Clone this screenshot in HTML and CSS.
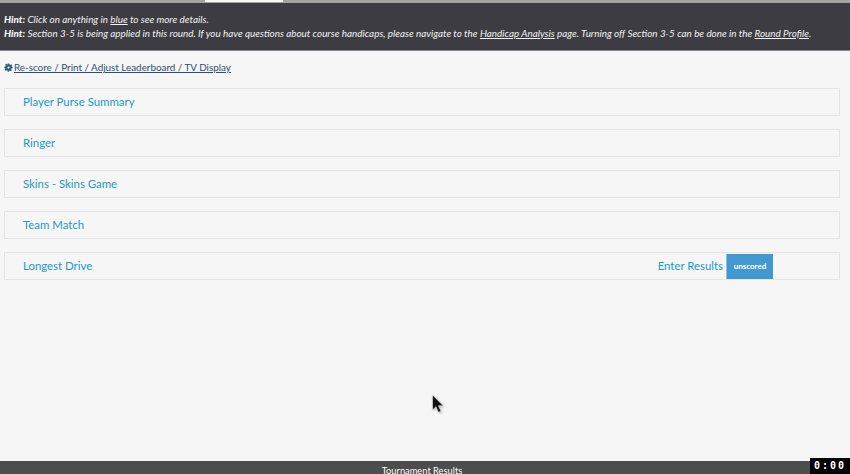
FILE: index.html
```html
<!DOCTYPE html>
<html lang="en">
<head>
<meta charset="utf-8">
<title>Tournament Results</title>
<link rel="stylesheet" href="styles.css">
</head>
<body>
<div class="topline"><span class="topline-tab"></span></div>
<header class="hints">
  <p><b>Hint:</b> Click on anything in <a href="#">blue</a> to see more details.</p>
  <p><b>Hint:</b> Section 3-5 is being applied in this round. If you have questions about course handicaps, please navigate to the <a href="#">Handicap Analysis</a> page. Turning off Section 3-5 can be done in the <a href="#">Round Profile</a>.</p>
</header>
<main class="content">
  <a class="tools" href="#">
    <svg class="gear" viewBox="0 0 24 24" aria-hidden="true"><path fill-rule="evenodd" d="M10 1h4l.6 3.2 1.900.8 2.700-1.800 2.800 2.800-1.800 2.700.8 1.900L23 10v4l-3.200.6-.8 1.900 1.800 2.700-2.800 2.800-2.700-1.800-1.900.8L13.800 23h-4l-.6-3.200-1.900-.8-2.700 1.800-2.800-2.800 1.800-2.700-.8-1.900L1 14v-4l3.200-.6.8-1.900-1.800-2.700 2.800-2.800 2.700 1.800 1.900-.8zM12 9a3 3 0 1 0 0 6 3 3 0 0 0 0-6z"/></svg>
    <span class="tools-label">Re-score / Print / Adjust Leaderboard / TV Display</span>
  </a>
  <ul class="rows">
    <li class="row"><a href="#">Player Purse Summary</a></li>
    <li class="row"><a href="#">Ringer</a></li>
    <li class="row"><a href="#">Skins - Skins Game</a></li>
    <li class="row"><a href="#">Team Match</a></li>
    <li class="row"><a href="#">Longest Drive</a>
      <div class="row-actions"><a href="#">Enter Results</a><span class="badge">unscored</span></div>
    </li>
  </ul>
</main>
<footer class="footer">Tournament Results</footer>
<svg class="cursor" viewBox="0 0 14 22" aria-hidden="true"><path d="M1.500 1v16.500l3.800-3.600 2.700 6.300 2.800-1.200-2.700-6.100h5.200z"/></svg>
<div class="timer">0:00</div>
</body>
</html>
```

FILE: styles.css
```css
* { box-sizing: border-box; }
html, body { height: 100%; margin: 0; }
body {
  position: relative;
  display: flex;
  flex-direction: column;
  overflow: hidden;
  background: #f6f6f6;
  font-family: Lato, "Open Sans", sans-serif;
}
a { color: inherit; }
.topline { height: 3px; background: #a3a3a3; flex: none; }
.topline-tab { display: block; width: 78px; height: 2px; margin-left: 205px; background: #f6f6f6; }
.hints {
  flex: none;
  height: 48px;
  padding: 10px 4px 0;
  background: #3d3c42;
  border-bottom: 1px solid #8b8b8b;
  color: #f2f2f2;
  font-size: 9.900px;
  font-style: italic;
  line-height: 13.500px;
}
.hints p { margin: 0; white-space: nowrap; }
.hints b { font-weight: 900; }
.content { flex: 1; padding: 9px 10px 0 4px; }
.tools {
  display: flex;
  align-items: center;
  gap: 2px;
  height: 14px;
  color: #2c4f77;
  font-size: 9.850px;
}
.gear { width: 9px; height: 9px; margin-right: -1px; fill: #2c5a85; flex: none; }
.tools-label { text-decoration: underline; white-space: nowrap; }
.rows { list-style: none; margin: 14px 0 0; padding: 0; display: flex; flex-direction: column; gap: 13px; }
.row {
  display: flex;
  align-items: center;
  justify-content: space-between;
  height: 28px;
  padding-left: 18px;
  padding-bottom: 1px;
  border: 1px solid #e4e4e4;
  color: #1b9ad1;
  font-size: 11.400px;
}
.row a { text-decoration: none; }
.row-actions { display: flex; align-items: center; height: 100%; gap: 3px; margin-right: 66px; margin-bottom: -1px; }
.row-actions a { padding-bottom: 1px; }
.badge {
  display: flex;
  align-items: center;
  justify-content: center;
  width: 47px;
  height: 100%;
  background: #4299d1;
  border-left: 1px solid #8fbfdf;
  color: #fff;
  font-size: 8px;
  font-weight: 700;
}
.footer {
  flex: none;
  height: 13px;
  padding: 4px 6px 0 0;
  background: #4d4d4d;
  color: #fff;
  font-size: 9.300px;
  line-height: 12px;
  text-align: center;
  overflow: hidden;
}
.cursor {
  position: absolute;
  left: 431px;
  top: 394px;
  width: 13px;
  height: 20px;
  fill: #111;
  stroke: #f6f6f6;
  stroke-width: .6;
  filter: drop-shadow(1px 1px 1px rgba(0,0,0,.25));
}
.timer {
  position: absolute;
  right: 0;
  bottom: 0;
  width: 40px;
  height: 16px;
  background: #000;
  color: #fff;
  font-family: "DejaVu Sans Mono", monospace;
  font-size: 10px;
  font-weight: 700;
  line-height: 16px;
  letter-spacing: 2px;
  text-align: center;
}
```
